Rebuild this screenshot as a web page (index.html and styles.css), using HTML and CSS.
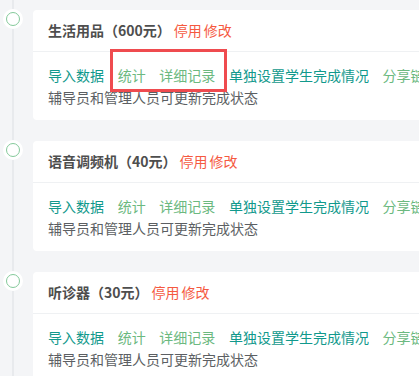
FILE: index.html
```html
<!DOCTYPE html>
<html lang="zh-CN">
<head>
  <meta charset="UTF-8" />
  <title>物品列表</title>
  <link rel="stylesheet" href="styles.css">
</head>
<body>

<div class="timeline">
  <div class="item">
    <span class="dot"></span>
    <div class="card">
      <div class="card-head">
        <span class="title">生活用品（600元）</span><a class="warn">停用</a><a class="warn">修改</a>
      </div>
      <div class="card-body">
        <div class="links">
          <a class="teal">导入数据</a>
          <a class="green">统计</a>
          <a class="green">详细记录</a>
          <a class="teal">单独设置学生完成情况</a>
          <a class="green">分享链接</a>
        </div>
        <div class="desc">辅导员和管理人员可更新完成状态</div>
      </div>
      <div class="mark"></div>
    </div>
  </div>

  <div class="item">
    <span class="dot"></span>
    <div class="card">
      <div class="card-head">
        <span class="title">语音调频机（40元）</span><a class="warn">停用</a><a class="warn">修改</a>
      </div>
      <div class="card-body">
        <div class="links">
          <a class="teal">导入数据</a>
          <a class="green">统计</a>
          <a class="green">详细记录</a>
          <a class="teal">单独设置学生完成情况</a>
          <a class="green">分享链接</a>
        </div>
        <div class="desc">辅导员和管理人员可更新完成状态</div>
      </div>
    </div>
  </div>

  <div class="item">
    <span class="dot"></span>
    <div class="card">
      <div class="card-head">
        <span class="title">听诊器（30元）</span><a class="warn">停用</a><a class="warn">修改</a>
      </div>
      <div class="card-body">
        <div class="links">
          <a class="teal">导入数据</a>
          <a class="green">统计</a>
          <a class="green">详细记录</a>
          <a class="teal">单独设置学生完成情况</a>
          <a class="green">分享链接</a>
        </div>
        <div class="desc">辅导员和管理人员可更新完成状态</div>
      </div>
    </div>
  </div>
</div>

</body>
</html>
```

FILE: styles.css
```css
body {
  margin: 0;
  padding: 0;
  background-color: #f4f5f7;
  font-family: "Noto Sans CJK SC", "Noto Sans", sans-serif;
  font-size: 14px;
  color: #555;
  overflow: hidden;
}

.timeline {
  position: relative;
  padding: 10px 0 0 33px;
}

.timeline::before {
  content: "";
  position: absolute;
  left: 12px;
  top: 0;
  bottom: 0;
  width: 2px;
  background-color: #e8eaed;
}

.item {
  position: relative;
  margin-bottom: 21px;
}

.dot {
  position: absolute;
  left: -27.5px;
  top: 1.5px;
  width: 12px;
  height: 12px;
  border: 1.5px solid #84c99a;
  border-radius: 50%;
  background-color: #fff;
  box-shadow: 0 0 0 3px #fff;
}

.card {
  position: relative;
  width: 420px;
  background-color: #fff;
  border-radius: 4px;
  white-space: nowrap;
}

.card-head {
  height: 41px;
  line-height: 41px;
  padding: 0 15px;
  border-bottom: 1px solid #eff1f3;
}

.title {
  font-weight: bold;
  color: #4e4e4e;
}

.warn {
  color: #f5593f;
  margin-left: 2px;
}

.title + .warn {
  margin-left: 3px;
}

.card-body {
  padding: 12px 15px 11px;
}

.links {
  line-height: 22px;
}

.links a {
  margin-right: 10.5px;
}

.teal {
  color: #11998c;
}

.green {
  color: #6cb97f;
}

.desc {
  line-height: 23px;
  color: #5c5f63;
}

.mark {
  position: absolute;
  left: 77px;
  top: 39px;
  width: 111px;
  height: 37px;
  border: 3px solid #ef4b4f;
}
```
